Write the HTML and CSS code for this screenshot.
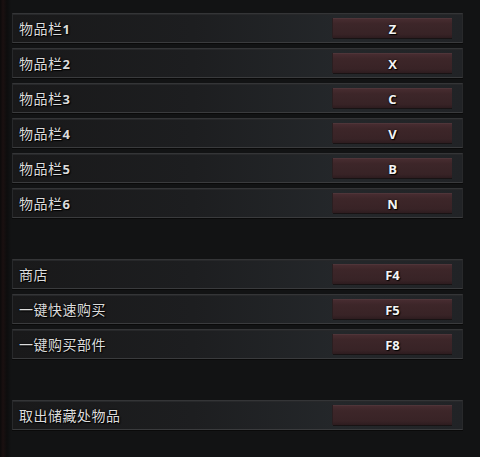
FILE: index.html
```html
<!DOCTYPE html>
<html lang="zh-CN">
<head>
<meta charset="utf-8">
<link rel="stylesheet" href="styles.css">
</head>
<body>
<div class="panel">
  <div class="group">
    <div class="row"><span class="label">物品栏<b>1</b></span><span class="key">Z</span></div>
    <div class="row"><span class="label">物品栏<b>2</b></span><span class="key">X</span></div>
    <div class="row"><span class="label">物品栏<b>3</b></span><span class="key">C</span></div>
    <div class="row"><span class="label">物品栏<b>4</b></span><span class="key">V</span></div>
    <div class="row"><span class="label">物品栏<b>5</b></span><span class="key">B</span></div>
    <div class="row"><span class="label">物品栏<b>6</b></span><span class="key">N</span></div>
  </div>
  <div class="group">
    <div class="row"><span class="label">商店</span><span class="key">F4</span></div>
    <div class="row"><span class="label">一键快速购买</span><span class="key">F5</span></div>
    <div class="row"><span class="label">一键购买部件</span><span class="key">F8</span></div>
  </div>
  <div class="group">
    <div class="row"><span class="label">取出储藏处物品</span><span class="key"></span></div>
  </div>
</div>
</body>
</html>
```
FILE: styles.css
```css
html, body {
  margin: 0;
  padding: 0;
  background: #111213;
}
body {
  width: 480px;
  height: 457px;
  overflow: hidden;
  font-family: "Noto Sans CJK SC", "Noto Sans", sans-serif;
  background: linear-gradient(to right, #0b0a0a 0px, #1a1010 3px, #0d0d0d 7px, #121314 11px, #121314 100%);
}
.panel {
  padding: 13px 0 0 12px;
  display: flex;
  flex-direction: column;
  gap: 41px;
}
.group {
  display: flex;
  flex-direction: column;
  gap: 5px;
}
.row {
  box-sizing: border-box;
  width: 451px;
  height: 30px;
  display: flex;
  align-items: center;
  justify-content: space-between;
  padding: 0 10px 0 6px;
  border: 1px solid #28292b;
  border-top-color: #343537;
  border-bottom-color: #3a3b3d;
  background: linear-gradient(to right, #19191a 0%, #1d1e20 40%, #24272a 72%, #212326 100%);
  box-shadow: inset 0 1px 0 #27282a, 0 1px 0 #0a0a0a;
}
.label {
  color: #dcdcdc;
  font-size: 14px;
  letter-spacing: 0.5px;
  text-shadow: 0 0 2px #000, 1px 1px 1px #000;
}
.label b {
  font-family: "Open Sans", "Noto Sans", sans-serif;
  font-weight: 700;
  font-size: 13px;
}
.key {
  box-sizing: border-box;
  width: 119px;
  height: 20px;
  display: flex;
  align-items: center;
  justify-content: center;
  color: #f4f4f4;
  font-family: "Open Sans", "Noto Sans", sans-serif;
  font-weight: 700;
  font-size: 13px;
  text-shadow: 0 0 2px #000, 1px 1px 1px #000;
  background: linear-gradient(to bottom, #472c30 0%, #3d2629 25%, #382326 80%, #2d1c1f 100%);
  border-top: 1px solid #4f3539;
  box-shadow: -1px 0 0 #2a1e20, 0 1px 0 #181314;
}
```
